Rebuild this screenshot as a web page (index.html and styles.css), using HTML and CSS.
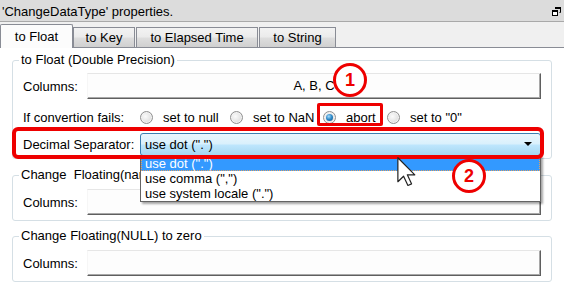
FILE: index.html
```html
<!DOCTYPE html>
<html lang="en">
<head>
  <meta charset="UTF-8">
  <title>ChangeDataType properties</title>
  <link rel="stylesheet" href="styles.css">
</head>
<body>
  <div class="window">
    <div class="titlebar">
      <span>'ChangeDataType' properties.</span>
      <svg class="restore" width="9" height="9" viewBox="0 0 9 9">
        <path d="M3.5 0.5h5v5h-1" fill="none" stroke="#000"/>
        <rect x="3" y="0" width="6" height="2" fill="#000"/>
        <rect x="0.5" y="3.5" width="5" height="5" fill="#fff" stroke="#000"/>
        <rect x="0" y="3" width="6" height="2" fill="#000"/>
      </svg>
    </div>

    <div class="tabs">
      <div class="tab active">to Float</div>
      <div class="tab key">to Key</div>
      <div class="tab elapsed">to Elapsed Time</div>
      <div class="tab string">to String</div>
    </div>

    <div class="panel">
      <fieldset class="group first">
        <legend>to Float (Double Precision)</legend>
        <div class="row">
          <span class="label">Columns:</span>
          <div class="field">A, B, C</div>
        </div>
        <div class="row radios">
          <span class="label wide">If convertion fails:</span>
          <span class="option opt-null"><span class="radio"></span>set to null</span>
          <span class="option opt-nan"><span class="radio"></span>set to NaN</span>
          <span class="option opt-abort"><span class="radio checked"></span>abort</span>
          <span class="option"><span class="radio"></span>set to "0"</span>
        </div>
        <div class="row decimal">
          <span class="label wide">Decimal Separator:</span>
          <div class="combo">use dot (".")<span class="arrow"></span></div>
        </div>
      </fieldset>

      <fieldset class="group second">
        <legend>Change&nbsp; Floating(nan) to null</legend>
        <div class="row">
          <span class="label">Columns:</span>
          <div class="field"></div>
        </div>
      </fieldset>

      <fieldset class="group third">
        <legend>Change Floating(NULL) to zero</legend>
        <div class="row">
          <span class="label">Columns:</span>
          <div class="field"></div>
        </div>
      </fieldset>
    </div>

    <!-- popup list of the combo -->
    <ul class="droplist">
      <li class="selected">use dot (".")</li>
      <li>use comma (",")</li>
      <li>use system locale (".")</li>
    </ul>

    <!-- annotations -->
    <div class="mark mark-decimal"></div>
    <div class="mark mark-abort"></div>
    <div class="badge badge-1">1</div>
    <div class="badge badge-2">2</div>
    <svg class="cursor" width="19" height="30" viewBox="0 0 12.5 20">
      <path d="M0.5 0.5 L0.5 16.5 L4.3 12.8 L7.2 19 L9.6 17.9 L6.8 11.9 L11.8 11.9 Z" fill="#fff" stroke="#222" stroke-width="0.8" stroke-linejoin="round"/>
    </svg>
  </div>
</body>
</html>
```

FILE: styles.css
```css
body {
  margin: 0;
  font-family: "Liberation Sans", Arial, sans-serif;
  font-size: 13px;
  color: #000;
  background: #fff;
}
.window {
  position: relative;
  width: 564px;
  height: 284px;
  overflow: hidden;
}

/* title */
.titlebar {
  box-sizing: border-box;
  height: 22px;
  padding: 2px 3px 0 2px;
  background: #dcdcdc;
  border-bottom: 1px solid #a9a9a9;
  display: flex;
  align-items: center;
  justify-content: space-between;
}
.restore {
  display: block;
}

/* tabs */
.tabs {
  height: 25px;
  background: #f0f0f0;
  border-bottom: 1px solid #898c95;
  display: flex;
  align-items: flex-end;
}
.tab {
  box-sizing: border-box;
  height: 20px;
  line-height: 19px;
  text-align: center;
  border: 1px solid #898c95;
  border-bottom: none;
  background: linear-gradient(#f3f3f3, #ebebeb 48%, #dedede 52%, #d0d0d0);
}
.tab.active {
  width: 73px;
  height: 24px;
  line-height: 23px;
  margin-bottom: -1px;
  background: #fcfcfc;
  border-radius: 2px 2px 0 0;
}
.tab.key {
  width: 62px;
}
.tab.elapsed {
  width: 122px;
  margin-left: 1px;
}
.tab.string {
  width: 77px;
  margin-left: 1px;
}

/* groups */
.panel {
  padding-top: 4px;
}
.group {
  margin: 0 12px;
  padding: 5px 10px 2px 10px;
  border: 1px solid #d5dfe5;
  border-radius: 3px;
  min-width: 0;
}
.group legend {
  padding: 0 2px;
  margin-left: -4px;
  line-height: 16px;
}
.group.second {
  margin-top: 8px;
  padding: 6px 10px 5px 10px;
}
.group.third {
  margin-top: 7px;
  padding: 6px 10px 5px 10px;
}
.row {
  display: flex;
  align-items: center;
}
.label {
  width: 64px;
  flex: none;
}
.label.wide {
  width: 117px;
}
.field {
  flex: 1;
  height: 26px;
  box-sizing: border-box;
  line-height: 24px;
  text-align: center;
  background: #fdfdfd;
  border-top: 1px solid #e6e6e6;
  border-left: 1px solid #f6f6f6;
  border-right: 1px solid #5f5f5f;
  border-bottom: 1px solid #5f5f5f;
  box-shadow: inset -1px -1px 0 #a8a8a8;
}

/* radios */
.radios {
  height: 22px;
  margin-top: 7px;
}
.option {
  display: flex;
  align-items: center;
  flex: none;
}
.opt-null {
  width: 90px;
}
.opt-nan {
  width: 93px;
}
.opt-abort {
  width: 64px;
}
.radio {
  width: 13px;
  height: 13px;
  box-sizing: border-box;
  border: 1px solid #8f8f8f;
  border-radius: 50%;
  margin-right: 10px;
  background: radial-gradient(circle at 40% 40%, #fbfbfb 0, #e9e9e9 45%, #cfcfcf 100%);
  box-shadow: inset 0 0 0 1px #f4f4f4;
  position: relative;
}
.radio.checked::after {
  content: "";
  position: absolute;
  left: 2px;
  top: 2px;
  width: 7px;
  height: 7px;
  border-radius: 50%;
  background: radial-gradient(circle at 40% 35%, #a6dcfb 0, #2a86c6 50%, #124f7c 100%);
}

/* combo */
.decimal {
  margin-top: 5px;
}
.combo {
  flex: 1;
  position: relative;
  height: 23px;
  box-sizing: border-box;
  line-height: 21px;
  padding-left: 4px;
  border: 1px solid #3c7fb1;
  border-radius: 3px;
  background: linear-gradient(#eaf6fd, #d9f0fc 48%, #bee6fd 52%, #a5d6f1);
}
.arrow {
  position: absolute;
  right: 8px;
  top: 8px;
  border-left: 4px solid transparent;
  border-right: 4px solid transparent;
  border-top: 4px solid #000;
}
.droplist {
  position: absolute;
  left: 140px;
  top: 155px;
  width: 401px;
  box-sizing: border-box;
  margin: 0;
  padding: 0;
  list-style: none;
  background: #fff;
  border: 1px solid #646464;
  box-shadow: 2px 2px 2px rgba(0, 0, 0, 0.35);
}
.droplist li {
  line-height: 15px;
  padding-left: 4px;
}
.droplist li.selected {
  background: #3399ff;
  color: #fff;
  outline: 1px dotted #e0a060;
  outline-offset: -1px;
}

/* annotations */
.mark {
  position: absolute;
  box-sizing: border-box;
  border: 3px solid #ee0000;
}
.mark-decimal {
  left: 12px;
  top: 127px;
  width: 532px;
  height: 32px;
  border-width: 4px;
  border-radius: 6px;
}
.mark-abort {
  left: 317px;
  top: 103px;
  width: 66px;
  height: 23px;
  border-radius: 2px;
}
.badge {
  position: absolute;
  width: 34px;
  height: 34px;
  box-sizing: border-box;
  border: 3px solid #ee0000;
  border-radius: 50%;
  background: #fff;
  color: #ee0000;
  font-weight: bold;
  font-size: 18px;
  line-height: 28px;
  text-align: center;
}
.badge-1 {
  left: 333px;
  top: 63px;
}
.badge-2 {
  left: 452px;
  top: 159px;
}
.cursor {
  position: absolute;
  left: 397px;
  top: 157px;
}
```
